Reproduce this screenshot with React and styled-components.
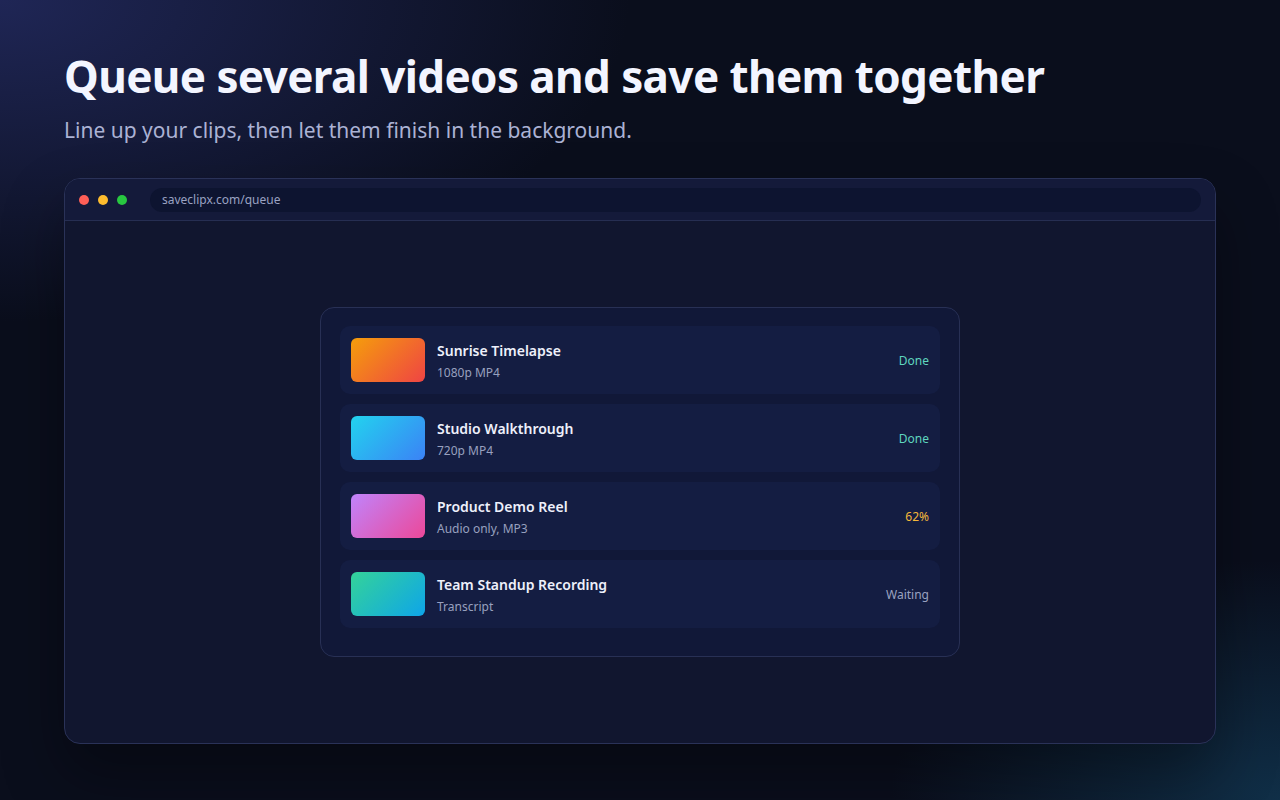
import styled, { createGlobalStyle } from 'styled-components';

const GlobalStyle = createGlobalStyle`
  * { box-sizing: border-box; }
  html, body {
    margin: 0;
    padding: 0;
  }
  body {
    font-family: "Noto Sans", "Open Sans", sans-serif;
    background: #0b0f1f;
  }
`;

const Page = styled.div`
  width: 1280px;
  height: 800px;
  overflow: hidden;
  padding: 48px 64px 0;
  background:
    radial-gradient(ellipse 900px 460px at 0% 0%, rgba(40, 48, 110, 0.7), transparent 70%),
    radial-gradient(ellipse 520px 320px at 100% 100%, rgba(18, 58, 86, 0.75), transparent 75%),
    #0a0e1c;
`;

const Title = styled.h1`
  margin: 0;
  font-size: 44px;
  font-weight: 700;
  line-height: 56px;
  letter-spacing: -0.6px;
  color: #f3f5ff;
`;

const Subtitle = styled.p`
  margin: 12px 0 0;
  font-size: 21px;
  line-height: 28px;
  color: #abb2d4;
`;

const BrowserFrame = styled.div`
  margin-top: 34px;
  width: 1152px;
  height: 566px;
  border: 1px solid #2a3258;
  border-radius: 16px;
  background: #11162f;
  overflow: hidden;
  display: flex;
  flex-direction: column;
  box-shadow: 0 30px 60px rgba(0, 0, 0, 0.35);
`;

const TopBar = styled.div`
  height: 42px;
  flex-shrink: 0;
  display: flex;
  align-items: center;
  gap: 9px;
  padding: 0 14px;
  background: #141a3a;
  border-bottom: 1px solid #262e52;
`;

const Dot = styled.span`
  width: 10px;
  height: 10px;
  border-radius: 50%;
  background: ${p => p.color};
`;

const UrlBar = styled.div`
  flex: 1;
  margin-left: 14px;
  height: 24px;
  border-radius: 12px;
  background: #0d1430;
  display: flex;
  align-items: center;
  padding: 0 12px;
  font-size: 12px;
  color: #9aa2c2;
`;

const Content = styled.div`
  flex: 1;
  display: flex;
  align-items: center;
  justify-content: center;
`;

const QueuePanel = styled.div`
  width: 640px;
  padding: 18px 19px 28px;
  border: 1px solid #283055;
  border-radius: 14px;
  background: #111838;
  display: flex;
  flex-direction: column;
  gap: 10px;
`;

const Row = styled.div`
  height: 68px;
  border-radius: 10px;
  background: #141d42;
  display: flex;
  align-items: center;
  padding: 0 11px;
  gap: 12px;
`;

const Thumb = styled.div`
  width: 74px;
  height: 44px;
  border-radius: 6px;
  flex-shrink: 0;
  background: linear-gradient(135deg, ${p => p.from}, ${p => p.to});
`;

const Info = styled.div`
  flex: 1;
  display: flex;
  flex-direction: column;
  gap: 3px;
  padding-top: 2px;
`;

const Name = styled.div`
  font-size: 14px;
  font-weight: 600;
  line-height: 20px;
  color: #eef0fb;
`;

const Meta = styled.div`
  font-size: 12px;
  line-height: 18px;
  color: #98a0bf;
`;

const Status = styled.div`
  font-size: 12px;
  color: ${p => p.color};
`;

const items = [
  { name: 'Sunrise Timelapse', meta: '1080p MP4', from: '#f59e0b', to: '#ef4444', status: 'Done', color: '#5fd6bf' },
  { name: 'Studio Walkthrough', meta: '720p MP4', from: '#22d3ee', to: '#3b82f6', status: 'Done', color: '#5fd6bf' },
  { name: 'Product Demo Reel', meta: 'Audio only, MP3', from: '#c084fc', to: '#ec4899', status: '62%', color: '#f5b83a' },
  { name: 'Team Standup Recording', meta: 'Transcript', from: '#34d399', to: '#0ea5e9', status: 'Waiting', color: '#9aa2c0' },
];

export default function App() {
  return (
    <>
      <GlobalStyle />
      <Page>
        <Title>Queue several videos and save them together</Title>
        <Subtitle>Line up your clips, then let them finish in the background.</Subtitle>
        <BrowserFrame>
          <TopBar>
            <Dot color="#ff5f57" />
            <Dot color="#febc2e" />
            <Dot color="#28c840" />
            <UrlBar>saveclipx.com/queue</UrlBar>
          </TopBar>
          <Content>
            <QueuePanel>
              {items.map(item => (
                <Row key={item.name}>
                  <Thumb from={item.from} to={item.to} />
                  <Info>
                    <Name>{item.name}</Name>
                    <Meta>{item.meta}</Meta>
                  </Info>
                  <Status color={item.color}>{item.status}</Status>
                </Row>
              ))}
            </QueuePanel>
          </Content>
        </BrowserFrame>
      </Page>
    </>
  );
}
